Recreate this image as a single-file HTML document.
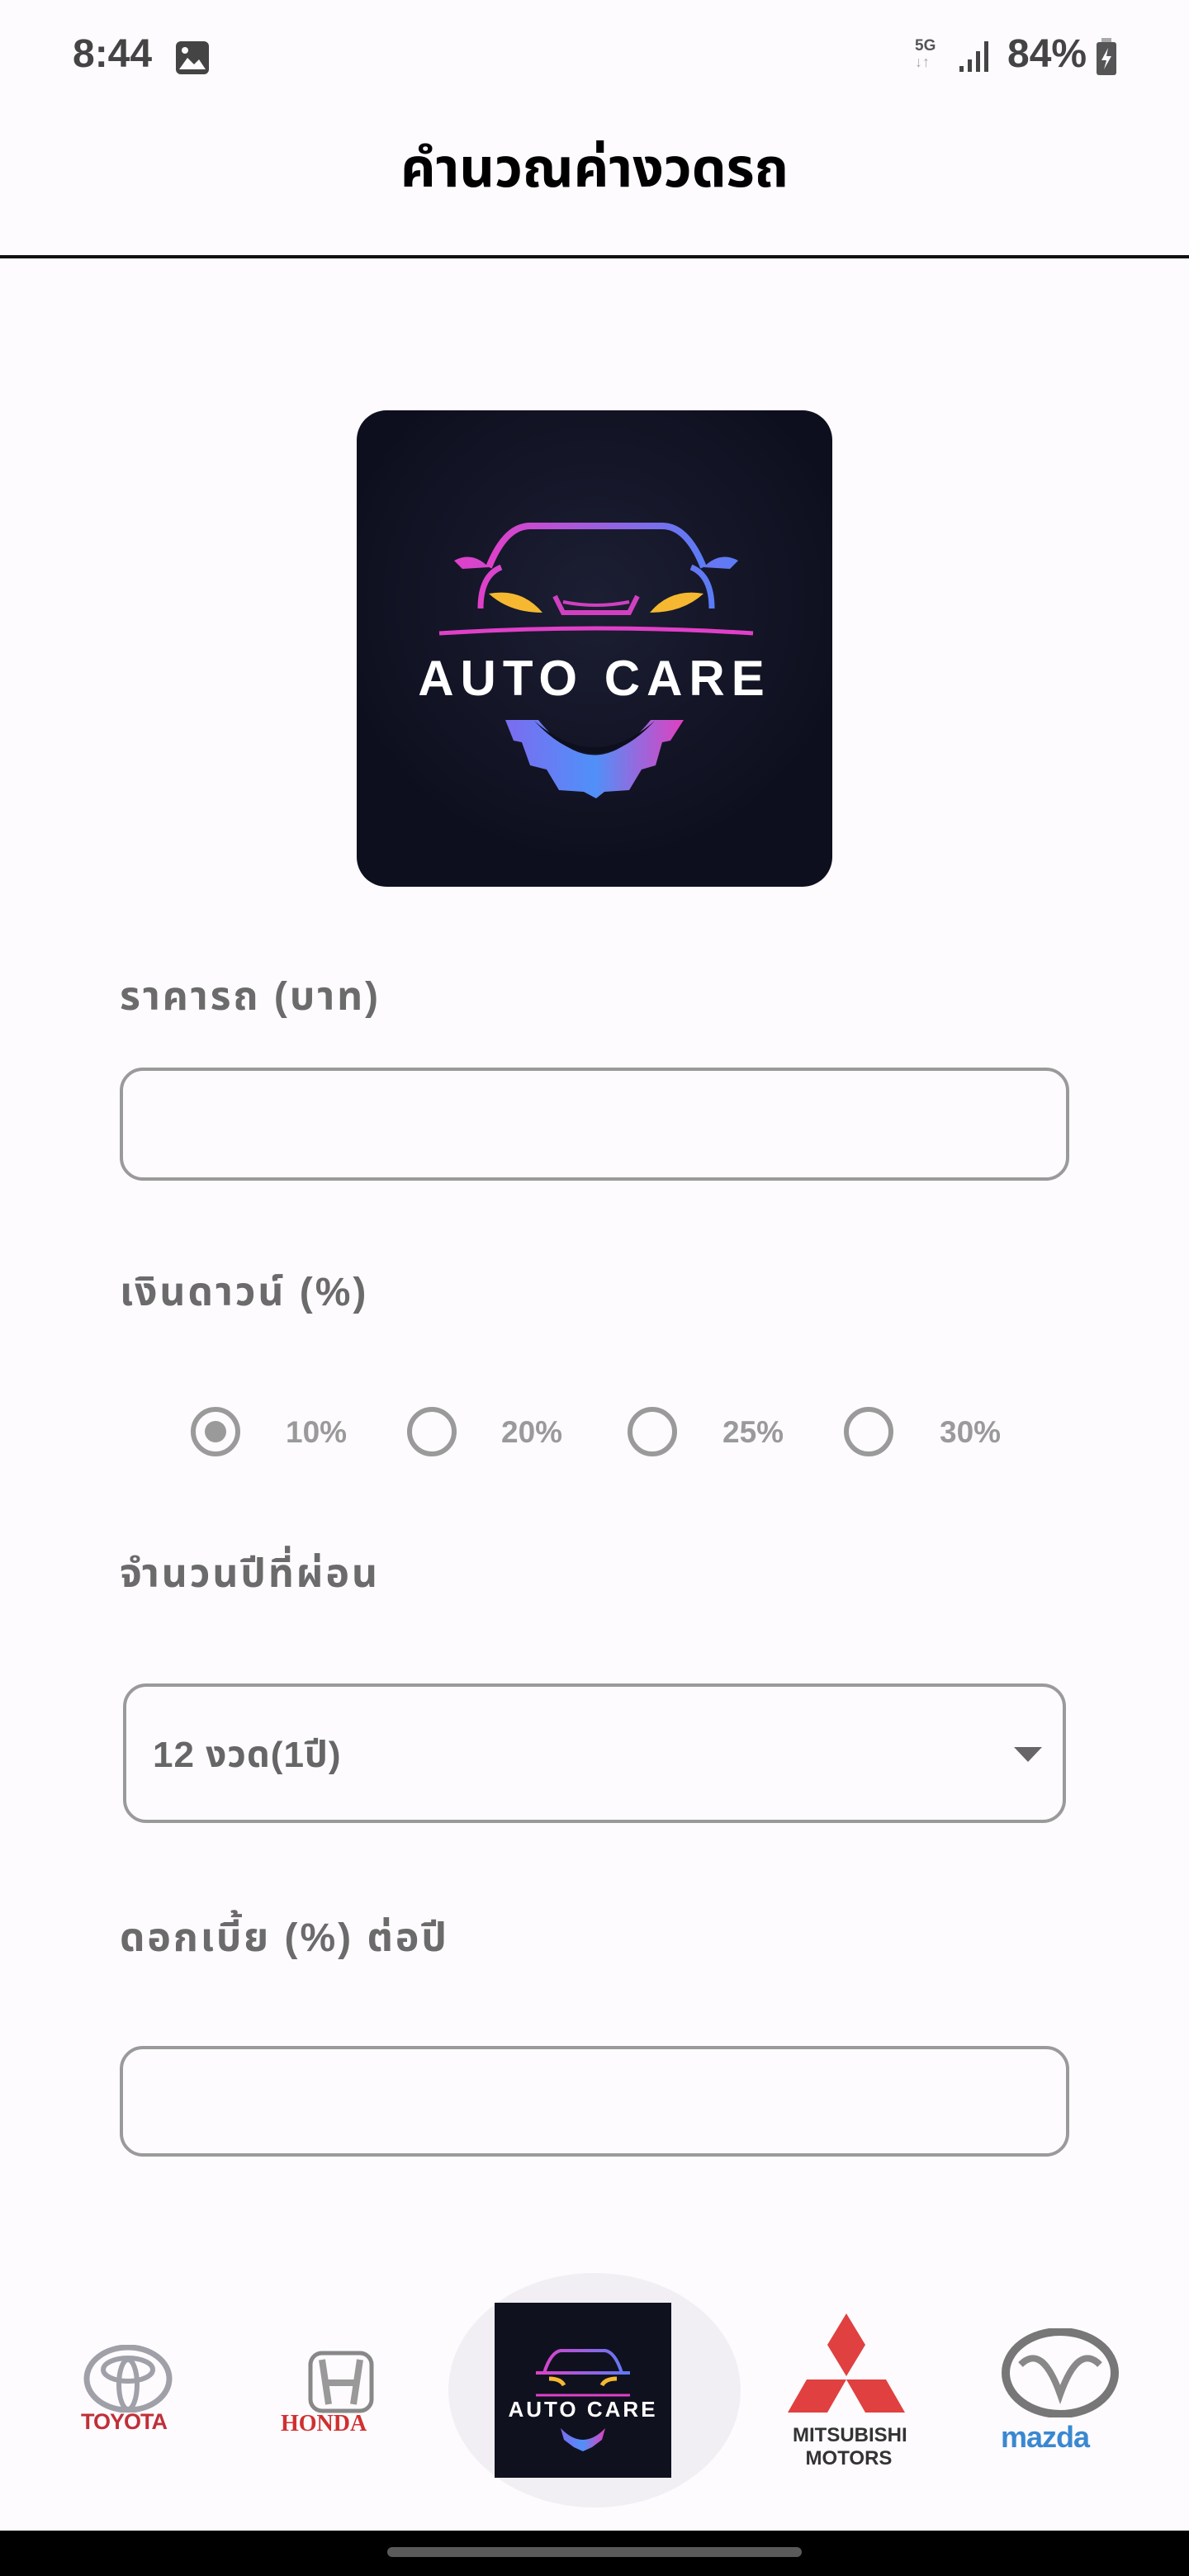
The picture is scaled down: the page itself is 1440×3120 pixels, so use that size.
<!DOCTYPE html>
<html><head><meta charset="utf-8">
<style>
*{margin:0;padding:0;box-sizing:border-box}
html,body{width:1440px;height:3120px;background:#fdfbfe;overflow:hidden;font-family:"Liberation Sans","Noto Sans Thai",sans-serif;position:relative}
.abs{position:absolute}
.lbl{position:absolute;left:145px;font-size:48px;font-weight:bold;color:#6b6b6b;line-height:1;letter-spacing:3px}
.inp{position:absolute;left:145px;width:1150px;border:4px solid #9a9a9a;border-radius:28px;background:#fdfbfe}
.rad{position:absolute;width:60px;height:60px;border:6px solid #9a9a9a;border-radius:50%;top:1704px}
.rt{position:absolute;top:1716px;font-size:37px;font-weight:bold;color:#9a9a9a;line-height:1}
</style></head><body>
<div class="abs" style="left:88px;top:42px;font-size:48px;font-weight:bold;color:#444;line-height:1">8:44</div>
<svg class="abs" style="left:211px;top:48px" width="44" height="44" viewBox="0 0 44 44"><rect x="2" y="2" width="40" height="40" rx="6" fill="#444"/><path d="M6 36 L16 22 L24 30 L30 24 L38 36Z" fill="#fdfbfe"/><circle cx="13" cy="13" r="4" fill="#fdfbfe"/></svg>
<div class="abs" style="left:1108px;top:46px;font-size:19px;font-weight:bold;color:#555;line-height:1">5G</div>
<div class="abs" style="left:1108px;top:66px;font-size:18px;color:#aaa;line-height:1">↓↑</div>
<svg class="abs" style="left:1160px;top:48px" width="42" height="40"><rect x="2" y="32" width="5" height="7" fill="#444"/><rect x="12" y="24" width="5" height="15" fill="#444"/><rect x="22" y="14" width="5" height="25" fill="#444"/><rect x="32" y="2" width="5" height="37" fill="#444"/></svg>
<div class="abs" style="left:1220px;top:42px;font-size:48px;font-weight:bold;color:#444;line-height:1">84%</div>
<svg class="abs" style="left:1326px;top:46px" width="28" height="46"><rect x="8" y="0" width="12" height="6" fill="#aaa"/><rect x="2" y="5" width="24" height="40" rx="3" fill="#555"/><path d="M16 12 L8 27 L14 27 L11 38 L20 22 L14 22Z" fill="#fdfbfe"/></svg>

<div class="abs" style="left:0;width:1440px;top:170px;text-align:center;font-size:66px;font-weight:bold;color:#000;line-height:1">คำนวณค่างวดรถ</div>
<div class="abs" style="left:0;top:309px;width:1440px;height:4px;background:#111"></div>

<div class="abs" style="left:432px;top:497px;width:576px;height:577px;border-radius:36px;background:radial-gradient(circle at 50% 40%,#1c1e33,#0e0f1e 70%);overflow:hidden">
<svg width="576" height="577" viewBox="0 0 576 577">
<defs><linearGradient id="g" x1="0" x2="1"><stop offset="0" stop-color="#e040c8"/><stop offset="1" stop-color="#5b7cf6"/></linearGradient>
<linearGradient id="g2" x1="0" x2="1"><stop offset="0" stop-color="#7b6cf0"/><stop offset="0.5" stop-color="#5090f8"/><stop offset="1" stop-color="#e040c0"/></linearGradient></defs>
<path d="M160 190 Q180 140 210 140 L370 140 Q400 140 420 190" fill="none" stroke="url(#g)" stroke-width="8"/>
<path d="M130 190 L450 190" stroke="url(#g)" stroke-width="7"/>
<path d="M150 240 Q150 200 175 190 M430 240 Q430 200 405 190" fill="none" stroke="url(#g)" stroke-width="7"/>
<path d="M118 182 Q140 170 160 190 L128 192Z M462 182 Q440 170 420 190 L452 192Z" fill="url(#g)"/>
<path d="M160 222 Q200 215 225 245 Q185 245 160 222Z" fill="#f5b830"/>
<path d="M420 222 Q380 215 355 245 Q395 245 420 222Z" fill="#f5b830"/>
<path d="M240 225 L250 245 L330 245 L340 225" fill="none" stroke="#d040c0" stroke-width="6"/>
<path d="M250 232 Q290 240 330 232" fill="none" stroke="#d040c0" stroke-width="4"/>
<path d="M100 270 Q290 258 480 270" fill="none" stroke="#e040c8" stroke-width="5"/>
<text x="288" y="345" text-anchor="middle" font-family="Liberation Sans,sans-serif" font-weight="bold" font-size="60" letter-spacing="8" fill="#fff">AUTO CARE</text>
<path d="M180 375 L220 375 Q288 460 356 375 L396 375 L380 400 L370 402 L362 430 L345 435 L330 460 L300 462 L290 470 L275 462 L245 460 L230 435 L210 430 L200 402 L190 400Z" fill="url(#g2)"/>
<path d="M215 376 Q288 440 361 376 Q288 455 215 376Z" fill="#0e0f1e"/>
</svg></div>

<div class="lbl" style="top:1184px">ราคารถ (บาท)</div>
<div class="inp" style="top:1293px;height:137px"></div>
<div class="lbl" style="top:1542px">เงินดาวน์ (%)</div>
<div class="rad" style="left:231px"><div style="position:absolute;left:11px;top:11px;width:26px;height:26px;border-radius:50%;background:#9a9a9a"></div></div>
<div class="rt" style="left:346px">10%</div>
<div class="rad" style="left:493px"></div><div class="rt" style="left:607px">20%</div>
<div class="rad" style="left:760px"></div><div class="rt" style="left:875px">25%</div>
<div class="rad" style="left:1022px"></div><div class="rt" style="left:1138px">30%</div>
<div class="lbl" style="top:1883px">จำนวนปีที่ผ่อน</div>
<div class="inp" style="left:149px;width:1142px;top:2039px;height:169px"></div>
<div class="abs" style="left:185px;top:2104px;font-size:44px;font-weight:bold;color:#666;line-height:1;letter-spacing:1px">12 งวด(1ปี)</div>
<svg class="abs" style="left:1228px;top:2116px" width="34" height="18"><path d="M0 0 L34 0 L17 18Z" fill="#666"/></svg>
<div class="lbl" style="top:2324px">ดอกเบี้ย (%) ต่อปี</div>
<div class="inp" style="top:2478px;height:134px"></div>

<div class="abs" style="left:543px;top:2753px;width:354px;height:284px;border-radius:50%;background:#f1eff3"></div>
<div class="abs" style="left:599px;top:2789px;width:214px;height:212px;background:#10111f">
<svg width="214" height="212" viewBox="0 0 214 212"><path d="M60 85 Q68 60 80 58 L134 58 Q146 60 154 85 M50 85 L164 85" fill="none" stroke="url(#g)" stroke-width="4"/>
<path d="M66 92 Q80 92 84 100 M148 92 Q134 92 130 100" stroke="#f5b830" stroke-width="5" fill="none"/>
<path d="M50 112 L164 112" stroke="#e040c8" stroke-width="3"/>
<text x="107" y="138" text-anchor="middle" font-family="Liberation Sans,sans-serif" font-weight="bold" font-size="26" letter-spacing="3" fill="#fff">AUTO CARE</text>
<path d="M80 152 Q107 180 134 152 L130 166 L118 175 L107 180 L96 175 L84 166Z" fill="url(#g2)"/></svg></div>

<svg class="abs" style="left:100px;top:2840px" width="110" height="82" viewBox="0 0 110 82"><ellipse cx="55" cy="41" rx="50" ry="38" fill="none" stroke="#a0a0a8" stroke-width="7"/><ellipse cx="55" cy="30" rx="30" ry="14" fill="none" stroke="#a0a0a8" stroke-width="6"/><ellipse cx="55" cy="48" rx="11" ry="30" fill="none" stroke="#a0a0a8" stroke-width="6"/></svg>
<div class="abs" style="left:98px;top:2920px;font-size:27px;color:#c03038;font-weight:bold;letter-spacing:-1px;line-height:1">TOYOTA</div>
<svg class="abs" style="left:372px;top:2846px" width="82" height="78"><rect x="4" y="4" width="74" height="70" rx="14" fill="none" stroke="#888" stroke-width="5"/><path d="M18 12 L26 66 M64 12 L56 66 M22 40 L60 40" stroke="#999" stroke-width="8"/></svg>
<div class="abs" style="left:340px;top:2922px;font-size:28px;color:#d03030;font-weight:bold;font-family:'Liberation Serif',serif;line-height:1">HONDA</div>
<svg class="abs" style="left:952px;top:2800px" width="146" height="124" viewBox="0 0 146 124"><path d="M73 2 L96 40 L73 78 L50 40Z M2 122 L25 82 L73 82 L50 122Z M144 122 L121 82 L73 82 L96 122Z" fill="#e04040"/></svg>
<div class="abs" style="left:960px;top:2936px;width:136px;text-align:center;font-size:24px;font-weight:bold;color:#333;line-height:1.15">MITSUBISHI<br>MOTORS</div>
<svg class="abs" style="left:1212px;top:2820px" width="144" height="108" viewBox="0 0 144 108"><ellipse cx="72" cy="54" rx="66" ry="50" fill="none" stroke="#777" stroke-width="10"/><path d="M24 44 Q50 18 72 80 Q94 18 120 44" fill="none" stroke="#888" stroke-width="8"/></svg>
<div class="abs" style="left:1212px;top:2934px;font-size:36px;color:#3a88d0;font-weight:bold;letter-spacing:-1px;line-height:1">mazda</div>

<div class="abs" style="left:0;top:3065px;width:1440px;height:55px;background:#000"></div>
<div class="abs" style="left:469px;top:3085px;width:502px;height:12px;border-radius:6px;background:#5a5a5a"></div>
</body></html>
